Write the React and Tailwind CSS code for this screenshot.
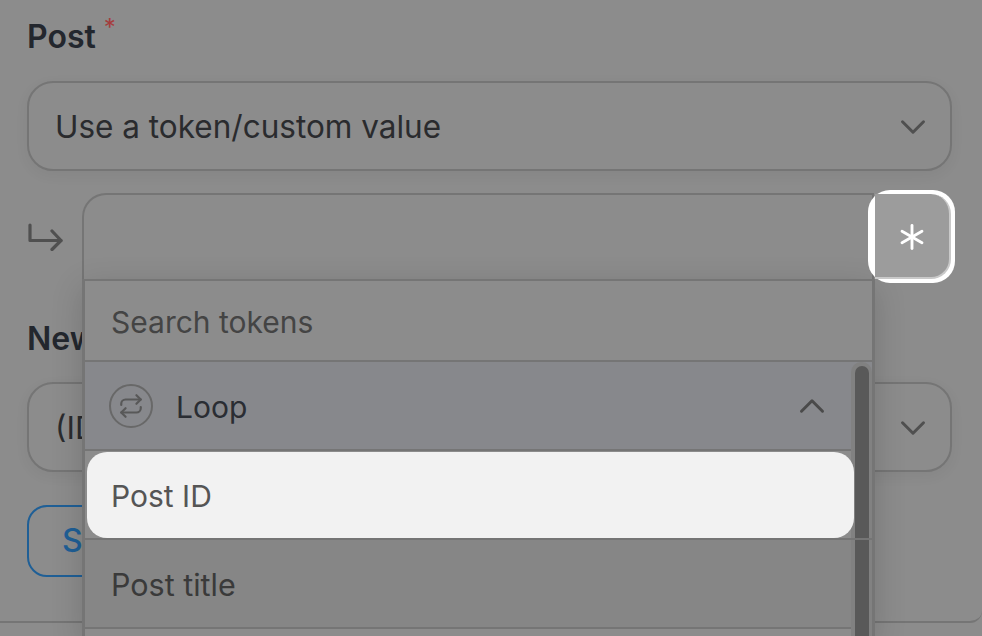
import React from "react";
import { ChevronDown, ChevronUp, Repeat, Asterisk } from "lucide-react";

function Select({ children }) {
  return (
    <div className="flex h-[90px] w-[925px] items-center justify-between rounded-[26px] border-2 border-[#757575] bg-[#8c8c8c] pl-[26px] pr-[16px] pt-[2px] shadow-[0_4px_14px_rgba(0,0,0,0.05)]">
      <span className="text-[31.500px] leading-none text-[#2a2b2e]">{children}</span>
      <ChevronDown size={42} strokeWidth={1.700} className="text-[#505050]" />
    </div>
  );
}

function Row({ children, className }) {
  return (
    <div className={"flex items-center border-b-[2px] border-[#757575] pl-[26px] leading-none " + className}>
      {children}
    </div>
  );
}

export default function App() {
  return (
    <div className="relative h-[636px] w-[982px] overflow-hidden bg-[#8c8c8c] font-['Inter',sans-serif]">
      <div className="absolute inset-x-0 top-0 h-[623px] rounded-br-[12px] border-b-2 border-[#757575]" />
      <div className="relative flex flex-col pl-[27px] pt-[19px]">
        <div className="flex h-[36px] items-start">
          <span className="text-[32px] font-semibold leading-[36px] text-[#23272e]">Post</span>
          <span className="ml-[8px] text-[24px] leading-[18px] text-[#a53d3d]">*</span>
        </div>
        <div className="mt-[26px]"><Select>Use a token/custom value</Select></div>

        <div className="mt-[22px] flex h-[87px]">
          <div className="flex w-[55px] items-start pt-[30px]">
            <svg width="36" height="28" viewBox="0 0 36 28" fill="none" stroke="#505050" strokeWidth="3.200" strokeLinecap="round" strokeLinejoin="round">
              <path d="M3 2v15.500h31" />
              <path d="M25 8l9 9.500-9 9" />
            </svg>
          </div>
          <div className="relative h-[87px] w-[792px] rounded-tl-[24px] border-2 border-b-0 border-[#757575] bg-[#8c8c8c]">
            <div className="absolute left-[-2px] top-[84px] z-10 flex h-[360px] w-[793px] flex-col border-x-[3px] border-t-[2px] border-[#757575] bg-[#8c8c8c] shadow-[0_8px_30px_rgba(0,0,0,0.16)]">
              <Row className="h-[81px] pt-[2px] text-[30px] text-[#444444]">Search tokens</Row>
              <div className="flex h-[89px] items-center border-b-[2px] border-[#757575] bg-[#87888c] pl-[24px] pr-[39px]">
                <span className="flex h-[44px] w-[44px] items-center justify-center rounded-full border-2 border-[#686868] text-[#585858]">
                  <Repeat size={26} strokeWidth={2} />
                </span>
                <span className="ml-[23px] flex-1 pt-[2px] text-[30px] leading-none text-[#2a2d33]">Loop</span>
                <ChevronUp size={42} strokeWidth={1.700} className="text-[#4a4a4a]" />
              </div>
              <div className="relative z-10 flex h-[89px] flex-col justify-center border-b-[2px] border-[#757575] pl-[2px]">
                <div className="flex h-[86px] w-[767px] items-center rounded-[20px] bg-[#f2f2f2] pl-[24px] pt-[2px] text-[30px] leading-none text-[#555555]">Post ID</div>
              </div>
              <Row className="h-[89px] bg-[#868686] pt-[4px] text-[30.500px] text-[#3a3a3a]">Post title</Row>
              <div className="absolute bottom-0 right-0 top-[81px] w-[21px] rounded-t-[10px] bg-[#818181] pl-[4px] pt-[4px]">
                <div className="h-full w-[14px] rounded-t-[8px] bg-[#595959]" />
              </div>
            </div>
            <div className="absolute left-[784px] top-[-5px] z-20 flex h-[93px] w-[87px] justify-end rounded-[22px] bg-white py-[4px] pr-[4px]">
              <div className="flex h-full w-[76px] items-center justify-center rounded-r-[20px] border-b-2 border-r-2 border-[#c9c9c9] bg-[#9c9c9c] pt-[2px]">
                <Asterisk size={46} strokeWidth={1.500} className="text-white" />
              </div>
            </div>
          </div>
        </div>

        <div className="mt-[41px] h-[36px]">
          <span className="text-[32px] font-semibold leading-[36px] text-[#23272e]">New</span>
        </div>
        <div className="mt-[25px]"><Select>(ID</Select></div>
        <div className="mt-[33px] flex h-[72px] w-[140px] items-center rounded-[20px] border-2 border-[#1f5f96] pl-[33px] text-[32px] font-medium leading-none text-[#1f5f96]">S</div>
      </div>
    </div>
  );
}
